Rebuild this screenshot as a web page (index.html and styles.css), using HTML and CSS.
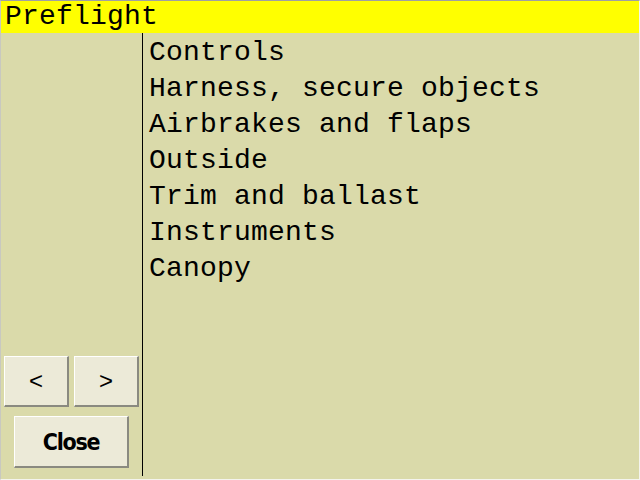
FILE: index.html
```html
<!DOCTYPE html>
<html>
<head>
<meta charset="utf-8">
<link rel="stylesheet" href="styles.css">
</head>
<body>
<div class="frame">
  <div class="title">Preflight</div>
  <div class="main">
    <div class="side">
      <div class="navrow">
        <button class="btn nav">&lt;</button>
        <button class="btn nav">&gt;</button>
      </div>
      <button class="btn close">Close</button>
    </div>
    <ul class="list">
      <li>Controls</li>
      <li>Harness, secure objects</li>
      <li>Airbrakes and flaps</li>
      <li>Outside</li>
      <li>Trim and ballast</li>
      <li>Instruments</li>
      <li>Canopy</li>
    </ul>
  </div>
</div>
</body>
</html>
```

FILE: styles.css
```css
html, body {
  margin: 0;
  padding: 0;
}
body {
  width: 640px;
  height: 480px;
  overflow: hidden;
}
.frame {
  box-sizing: border-box;
  width: 640px;
  height: 480px;
  border-top: 1px solid #a0a0a0;
  border-left: 1px solid #c8c8c0;
  border-right: 1px solid #f4f4ee;
  border-bottom: 1px solid #f4f4ee;
  background: #dadaaa;
  display: flex;
  flex-direction: column;
}
.title {
  height: 32px;
  background: #ffff00;
  font-family: "Liberation Mono", monospace;
  font-size: 28px;
  letter-spacing: 0.2px;
  line-height: 32px;
  padding-left: 4px;
  color: #000;
}
.main {
  flex: 1;
  display: flex;
  min-height: 0;
}
.side {
  width: 142px;
  border-right: 1px solid #000;
  margin-bottom: 3px;
  display: flex;
  flex-direction: column;
  justify-content: flex-end;
  align-items: center;
  padding-bottom: 8px;
  box-sizing: border-box;
}
.navrow {
  display: flex;
  gap: 5px;
  margin-bottom: 9px;
}
.btn {
  box-sizing: border-box;
  margin: 0;
  padding: 0;
  background: #ecead8;
  border-top: 1px solid #ffffff;
  border-left: 1px solid #ffffff;
  border-right: 2px solid #8a8a80;
  border-bottom: 2px solid #8a8a80;
  color: #000;
}
.nav {
  width: 65px;
  height: 51px;
  font-family: "Liberation Sans", sans-serif;
  font-size: 24px;
}
.close {
  width: 115px;
  height: 52px;
  font-family: "DejaVu Sans Condensed", "DejaVu Sans", sans-serif;
  font-stretch: condensed;
  font-weight: bold;
  font-size: 23px;
  letter-spacing: -1.3px;
}
.list {
  list-style: none;
  margin: 0;
  padding: 2px 0 0 6px;
  flex: 1;
  font-family: "Liberation Mono", monospace;
  font-size: 28px;
  letter-spacing: 0.2px;
  line-height: 36px;
  color: #000;
}
```
